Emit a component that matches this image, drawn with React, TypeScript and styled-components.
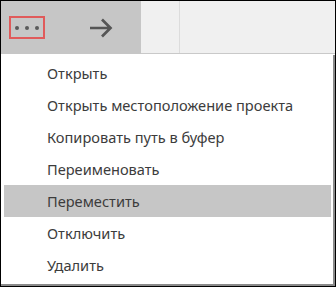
import React from "react";
import styled, { createGlobalStyle } from "styled-components";

const Global = createGlobalStyle`
  html, body {
    margin: 0;
    padding: 0;
    background: #fff;
  }
`;

const Frame = styled.div`
  width: 336px;
  height: 287px;
  box-sizing: border-box;
  border: 1px solid #000;
  display: flex;
  flex-direction: column;
  background: #fff;
  font-family: "Noto Sans", "Open Sans", sans-serif;
`;

const Toolbar = styled.div`
  height: 53px;
  display: flex;
  flex-shrink: 0;
`;

const ButtonArea = styled.div`
  width: 140px;
  background: #c6c6c6;
  display: flex;
  align-items: center;
  padding-left: 8px;
  box-sizing: border-box;
  gap: 44px;
`;

const MoreButton = styled.div`
  width: 36px;
  height: 23px;
  box-sizing: border-box;
  border: 2px solid #e05a5a;
  display: flex;
  align-items: center;
  justify-content: center;
  gap: 6px;
`;

const Dot = styled.span`
  width: 4px;
  height: 4px;
  border-radius: 50%;
  background: #5a5a5a;
`;

const Rest = styled.div`
  flex: 1;
  background: #f0f0f0;
  border-bottom: 1px solid #c9c9c9;
  display: flex;
`;

const Divider = styled.div`
  margin-left: 38px;
  width: 1px;
  background: #dcdcdc;
`;

const Menu = styled.ul`
  list-style: none;
  margin: 1px 0 0 0;
  padding: 2px 2px 0 3px;
  flex: 1;
  border-right: 2px solid #8a8a8a;
  border-bottom: 2px solid #8a8a8a;
  background: #fff;
`;

const Item = styled.li<{ $active?: boolean }>`
  height: 32px;
  display: flex;
  align-items: center;
  padding-left: 43px;
  font-size: 14.6px;
  color: #3c3c3c;
  background: ${(p) => (p.$active ? "#c6c6c6" : "transparent")};
`;

const items = [
  "Открыть",
  "Открыть местоположение проекта",
  "Копировать путь в буфер",
  "Переименовать",
  "Переместить",
  "Отключить",
  "Удалить",
];

export default function App() {
  return (
    <>
      <Global />
      <Frame>
        <Toolbar>
          <ButtonArea>
            <MoreButton>
              <Dot />
              <Dot />
              <Dot />
            </MoreButton>
            <svg width="24" height="20" viewBox="0 0 24 20">
              <path
                d="M1 10 H21.5 M13 1.5 L21.5 10 L13 18.5"
                fill="none"
                stroke="#555"
                strokeWidth="2.7"
              />
            </svg>
          </ButtonArea>
          <Rest>
            <Divider />
          </Rest>
        </Toolbar>
        <Menu>
          {items.map((t, i) => (
            <Item key={t} $active={i === 4}>
              {t}
            </Item>
          ))}
        </Menu>
      </Frame>
    </>
  );
}
